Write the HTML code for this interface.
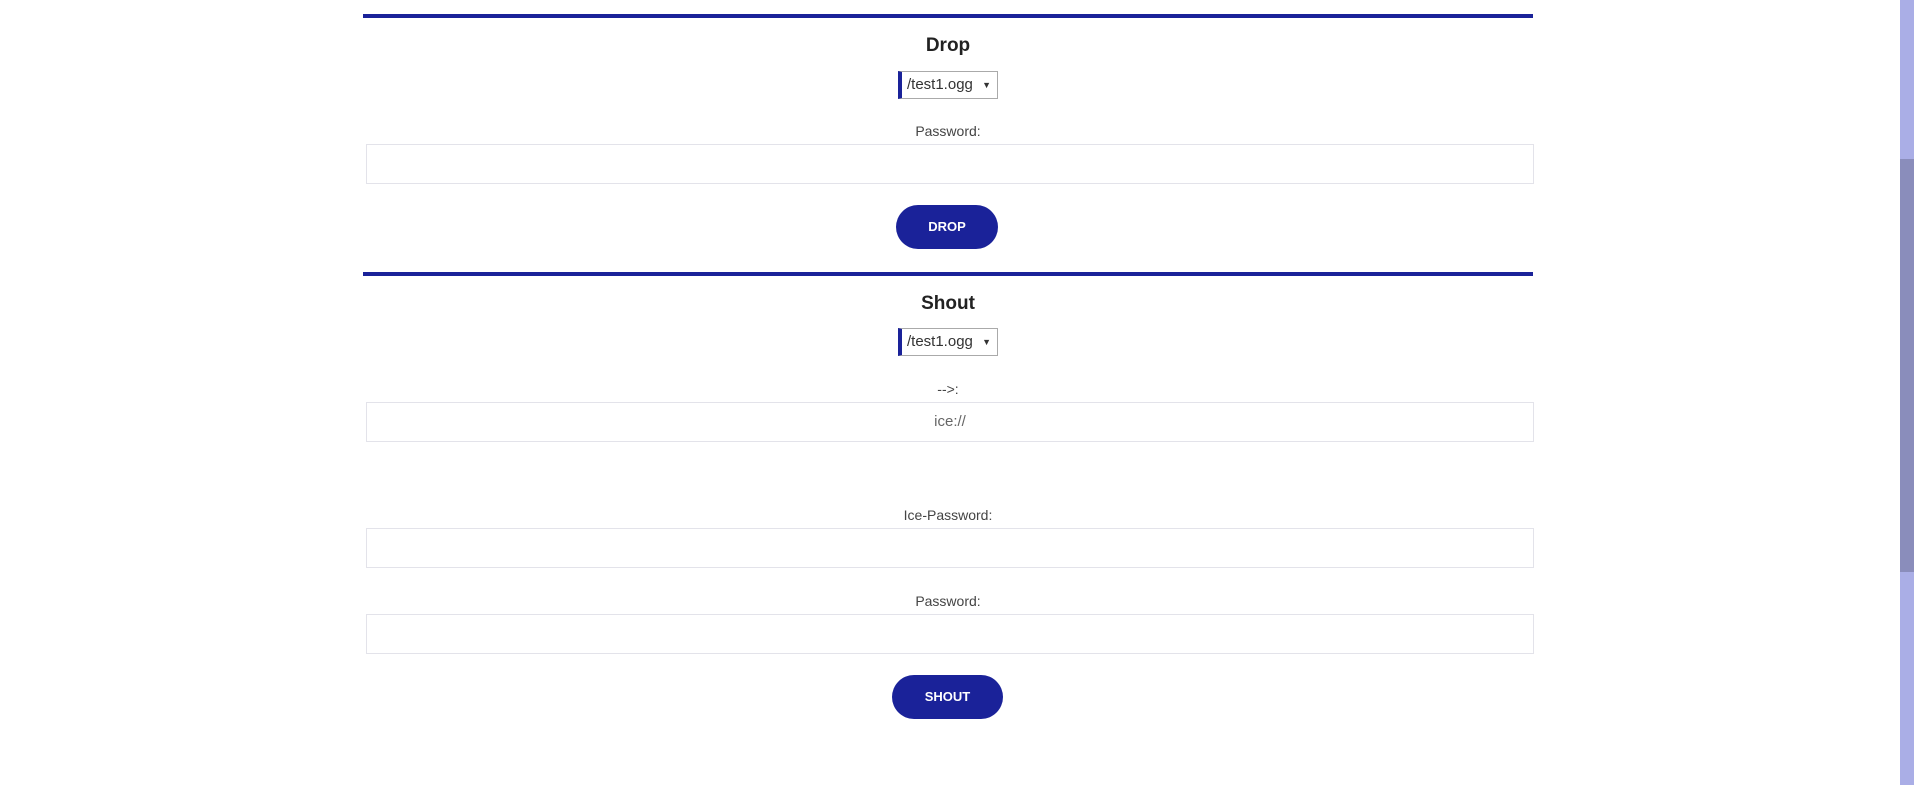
<!DOCTYPE html>
<html><head><meta charset="utf-8"><style>
body{margin:0;width:1914px;height:785px;background:#fff;font-family:"Liberation Sans",sans-serif;position:relative;overflow:hidden;color:#333}
.line{position:absolute;left:363px;width:1170px;height:4px;background:#1a2299}
.t{position:absolute;left:363px;width:1170px;text-align:center;font-weight:bold;font-size:19px;color:#222}
.l{position:absolute;left:363px;width:1170px;text-align:center;font-size:14px;color:#444}
.in{position:absolute;left:366px;width:1168px;border:1px solid #e3e3ea;box-sizing:border-box;height:40px;text-align:center;font-size:15px;color:#666;line-height:38px}
.sel{position:absolute;width:100px;height:28px;box-sizing:border-box;border:1px solid #aaa;border-left:4px solid #1a2299;font-size:15px;line-height:26px;padding-left:5px;color:#333}
.sel:after{content:"▼";position:absolute;right:6px;top:0;font-size:9px}
.btn{position:absolute;background:#1a2299;color:#fff;font-weight:bold;font-size:13px;text-align:center;border-radius:22px;height:44px;line-height:44px}
.sb{position:absolute;left:1900px;top:0;width:14px;height:785px;background:#aaaee6}
.th{position:absolute;left:1900px;top:159px;width:14px;height:413px;background:#8a8dbb}
</style></head><body>
<div class="line" style="top:14px"></div>
<div class="t" style="top:35px">Drop</div>
<div class="sel" style="left:898px;top:71px">/test1.ogg</div>
<div class="l" style="top:123px">Password:</div>
<div class="in" style="top:144px"></div>
<div class="btn" style="left:896px;top:205px;width:102px">DROP</div>
<div class="line" style="top:272px"></div>
<div class="t" style="top:293px">Shout</div>
<div class="sel" style="left:898px;top:328px">/test1.ogg</div>
<div class="l" style="top:381px">--&gt;:</div>
<div class="in" style="top:402px">ice://</div>
<div class="l" style="top:507px">Ice-Password:</div>
<div class="in" style="top:528px"></div>
<div class="l" style="top:593px">Password:</div>
<div class="in" style="top:614px"></div>
<div class="btn" style="left:892px;top:675px;width:111px">SHOUT</div>
<div class="sb"></div><div class="th"></div>
</body></html>
